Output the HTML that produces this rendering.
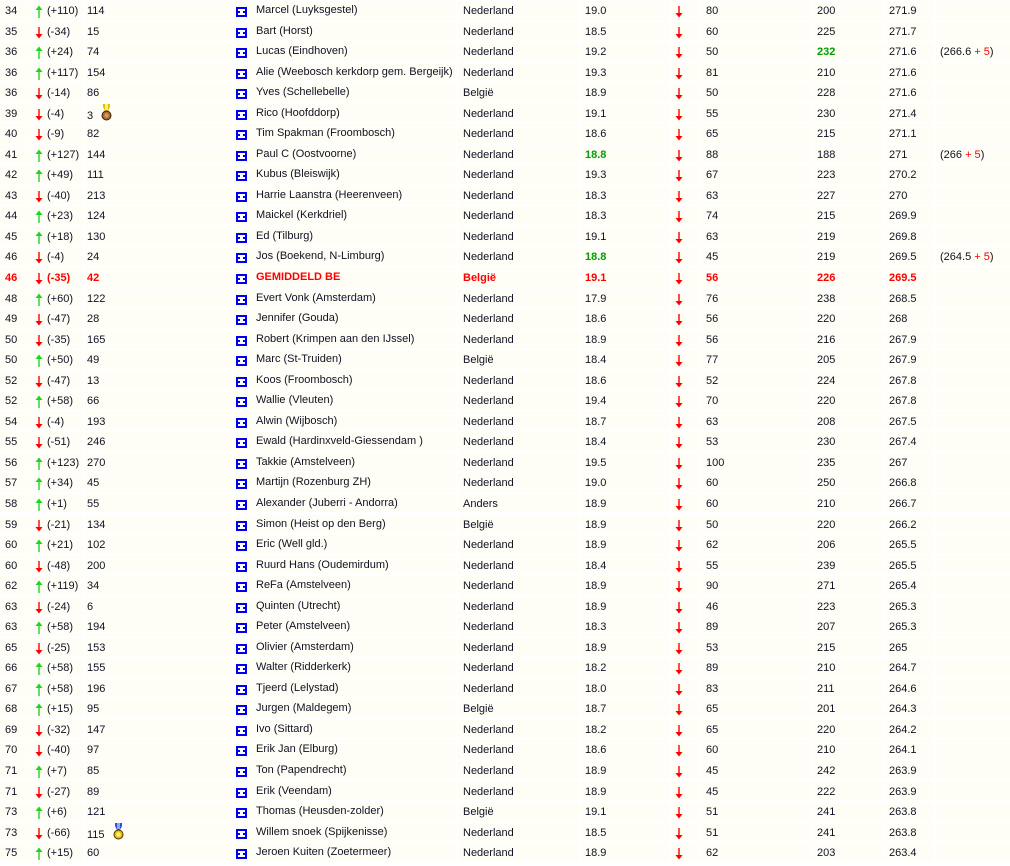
<!DOCTYPE html>
<html><head><meta charset="utf-8">
<style>
html,body{margin:0;padding:0;width:1010px;height:866px;overflow:hidden;background:#fff;}
body{font-family:"Liberation Sans",Arial,sans-serif;font-size:11px;color:#111122;position:relative;}
.r{position:absolute;left:0;width:1010px;height:18.5px;background:#fefdf6;}
.r span{position:absolute;top:4px;white-space:nowrap;}
.c1{left:5px}.c3{left:47px}.c4{left:87px}
.c5{left:256px;top:3px!important}.c6{left:463px}.c7{left:585px}.c9{left:706px}.c10{left:817px}.c11{left:889px}.c12{left:940px}
.g{color:#00a000;font-weight:bold}
.red span{color:#f00;font-weight:bold}
.p{color:#f00;position:static!important}
.r svg{position:absolute;top:4px}
.r svg.f{left:236px;top:6px}
.sep{position:absolute;top:0;height:866px;width:2px;background:#fff}
</style></head><body>
<svg width="0" height="0" style="position:absolute"><defs>
<symbol id="u" viewBox="0 0 8 13"><path d="M4 13V2" stroke="#1ed51e" stroke-width="1.4"/><path d="M0.5 5L4 0.5L7.5 5Z" fill="#1ed51e"/></symbol>
<symbol id="d" viewBox="0 0 8 13"><path d="M4 1V10" stroke="#f00" stroke-width="1.4"/><path d="M0.5 8L4 12.5L7.5 8Z" fill="#f00"/></symbol>
<symbol id="f" viewBox="0 0 11 10"><rect width="11" height="10" fill="#0000f0"/><rect x="2" y="2" width="7" height="2" fill="#fff"/><rect x="4" y="4" width="3" height="2" fill="#fff"/><rect x="2" y="6" width="7" height="2" fill="#fff"/></symbol>
</defs></svg>

<div class="r" style="top:1px"><span class="c1">34</span><svg style="left:35px" width="8" height="13"><use href="#u"/></svg><span class="c3">(+110)</span><span class="c4">114</span><svg class="f" width="11" height="10"><use href="#f"/></svg><span class="c5">Marcel (Luyksgestel)</span><span class="c6">Nederland</span><span class="c7">19.0</span><svg style="left:675px" width="8" height="13"><use href="#d"/></svg><span class="c9">80</span><span class="c10">200</span><span class="c11">271.9</span></div>
<div class="r" style="top:21.54px"><span class="c1">35</span><svg style="left:35px" width="8" height="13"><use href="#d"/></svg><span class="c3">(-34)</span><span class="c4">15</span><svg class="f" width="11" height="10"><use href="#f"/></svg><span class="c5">Bart (Horst)</span><span class="c6">Nederland</span><span class="c7">18.5</span><svg style="left:675px" width="8" height="13"><use href="#d"/></svg><span class="c9">60</span><span class="c10">225</span><span class="c11">271.7</span></div>
<div class="r" style="top:42.08px"><span class="c1">36</span><svg style="left:35px" width="8" height="13"><use href="#u"/></svg><span class="c3">(+24)</span><span class="c4">74</span><svg class="f" width="11" height="10"><use href="#f"/></svg><span class="c5">Lucas (Eindhoven)</span><span class="c6">Nederland</span><span class="c7">19.2</span><svg style="left:675px" width="8" height="13"><use href="#d"/></svg><span class="c9">50</span><span class="c10 g">232</span><span class="c11">271.6</span><span class="c12">(266.6 <span class="p">+ 5</span>)</span></div>
<div class="r" style="top:62.62px"><span class="c1">36</span><svg style="left:35px" width="8" height="13"><use href="#u"/></svg><span class="c3">(+117)</span><span class="c4">154</span><svg class="f" width="11" height="10"><use href="#f"/></svg><span class="c5">Alie (Weebosch kerkdorp gem. Bergeijk)</span><span class="c6">Nederland</span><span class="c7">19.3</span><svg style="left:675px" width="8" height="13"><use href="#d"/></svg><span class="c9">81</span><span class="c10">210</span><span class="c11">271.6</span></div>
<div class="r" style="top:83.16px"><span class="c1">36</span><svg style="left:35px" width="8" height="13"><use href="#d"/></svg><span class="c3">(-14)</span><span class="c4">86</span><svg class="f" width="11" height="10"><use href="#f"/></svg><span class="c5">Yves (Schellebelle)</span><span class="c6">België</span><span class="c7">18.9</span><svg style="left:675px" width="8" height="13"><use href="#d"/></svg><span class="c9">50</span><span class="c10">228</span><span class="c11">271.6</span></div>
<div class="r" style="top:103.7px"><span class="c1">39</span><svg style="left:35px" width="8" height="13"><use href="#d"/></svg><span class="c3">(-4)</span><span class="c4" style="top:6px">3</span><svg style="left:101px;top:0px" width="11" height="17" viewBox="0 0 11 17"><path d="M2 0h7v3L7 7h-3L2 3Z" fill="#e0c000"/><path d="M4 0h3v6h-3Z" fill="#fff07a"/><circle cx="5.5" cy="11.5" r="4.5" fill="#a86a2c" stroke="#3a2410" stroke-width="1"/><circle cx="5.5" cy="11.5" r="2.2" fill="#d49a5a"/></svg><svg class="f" width="11" height="10"><use href="#f"/></svg><span class="c5">Rico (Hoofddorp)</span><span class="c6">Nederland</span><span class="c7">19.1</span><svg style="left:675px" width="8" height="13"><use href="#d"/></svg><span class="c9">55</span><span class="c10">230</span><span class="c11">271.4</span></div>
<div class="r" style="top:124.24px"><span class="c1">40</span><svg style="left:35px" width="8" height="13"><use href="#d"/></svg><span class="c3">(-9)</span><span class="c4">82</span><svg class="f" width="11" height="10"><use href="#f"/></svg><span class="c5">Tim Spakman (Froombosch)</span><span class="c6">Nederland</span><span class="c7">18.6</span><svg style="left:675px" width="8" height="13"><use href="#d"/></svg><span class="c9">65</span><span class="c10">215</span><span class="c11">271.1</span></div>
<div class="r" style="top:144.78px"><span class="c1">41</span><svg style="left:35px" width="8" height="13"><use href="#u"/></svg><span class="c3">(+127)</span><span class="c4">144</span><svg class="f" width="11" height="10"><use href="#f"/></svg><span class="c5">Paul C (Oostvoorne)</span><span class="c6">Nederland</span><span class="c7 g">18.8</span><svg style="left:675px" width="8" height="13"><use href="#d"/></svg><span class="c9">88</span><span class="c10">188</span><span class="c11">271</span><span class="c12">(266 <span class="p">+ 5</span>)</span></div>
<div class="r" style="top:165.32px"><span class="c1">42</span><svg style="left:35px" width="8" height="13"><use href="#u"/></svg><span class="c3">(+49)</span><span class="c4">111</span><svg class="f" width="11" height="10"><use href="#f"/></svg><span class="c5">Kubus (Bleiswijk)</span><span class="c6">Nederland</span><span class="c7">19.3</span><svg style="left:675px" width="8" height="13"><use href="#d"/></svg><span class="c9">67</span><span class="c10">223</span><span class="c11">270.2</span></div>
<div class="r" style="top:185.86px"><span class="c1">43</span><svg style="left:35px" width="8" height="13"><use href="#d"/></svg><span class="c3">(-40)</span><span class="c4">213</span><svg class="f" width="11" height="10"><use href="#f"/></svg><span class="c5">Harrie Laanstra (Heerenveen)</span><span class="c6">Nederland</span><span class="c7">18.3</span><svg style="left:675px" width="8" height="13"><use href="#d"/></svg><span class="c9">63</span><span class="c10">227</span><span class="c11">270</span></div>
<div class="r" style="top:206.4px"><span class="c1">44</span><svg style="left:35px" width="8" height="13"><use href="#u"/></svg><span class="c3">(+23)</span><span class="c4">124</span><svg class="f" width="11" height="10"><use href="#f"/></svg><span class="c5">Maickel (Kerkdriel)</span><span class="c6">Nederland</span><span class="c7">18.3</span><svg style="left:675px" width="8" height="13"><use href="#d"/></svg><span class="c9">74</span><span class="c10">215</span><span class="c11">269.9</span></div>
<div class="r" style="top:226.94px"><span class="c1">45</span><svg style="left:35px" width="8" height="13"><use href="#u"/></svg><span class="c3">(+18)</span><span class="c4">130</span><svg class="f" width="11" height="10"><use href="#f"/></svg><span class="c5">Ed (Tilburg)</span><span class="c6">Nederland</span><span class="c7">19.1</span><svg style="left:675px" width="8" height="13"><use href="#d"/></svg><span class="c9">63</span><span class="c10">219</span><span class="c11">269.8</span></div>
<div class="r" style="top:247.48px"><span class="c1">46</span><svg style="left:35px" width="8" height="13"><use href="#d"/></svg><span class="c3">(-4)</span><span class="c4">24</span><svg class="f" width="11" height="10"><use href="#f"/></svg><span class="c5">Jos (Boekend, N-Limburg)</span><span class="c6">Nederland</span><span class="c7 g">18.8</span><svg style="left:675px" width="8" height="13"><use href="#d"/></svg><span class="c9">45</span><span class="c10">219</span><span class="c11">269.5</span><span class="c12">(264.5 <span class="p">+ 5</span>)</span></div>
<div class="r red" style="top:268.02px"><span class="c1">46</span><svg style="left:35px" width="8" height="13"><use href="#d"/></svg><span class="c3">(-35)</span><span class="c4">42</span><svg class="f" width="11" height="10"><use href="#f"/></svg><span class="c5">GEMIDDELD BE</span><span class="c6">België</span><span class="c7">19.1</span><svg style="left:675px" width="8" height="13"><use href="#d"/></svg><span class="c9">56</span><span class="c10">226</span><span class="c11">269.5</span></div>
<div class="r" style="top:288.56px"><span class="c1">48</span><svg style="left:35px" width="8" height="13"><use href="#u"/></svg><span class="c3">(+60)</span><span class="c4">122</span><svg class="f" width="11" height="10"><use href="#f"/></svg><span class="c5">Evert Vonk (Amsterdam)</span><span class="c6">Nederland</span><span class="c7">17.9</span><svg style="left:675px" width="8" height="13"><use href="#d"/></svg><span class="c9">76</span><span class="c10">238</span><span class="c11">268.5</span></div>
<div class="r" style="top:309.1px"><span class="c1">49</span><svg style="left:35px" width="8" height="13"><use href="#d"/></svg><span class="c3">(-47)</span><span class="c4">28</span><svg class="f" width="11" height="10"><use href="#f"/></svg><span class="c5">Jennifer (Gouda)</span><span class="c6">Nederland</span><span class="c7">18.6</span><svg style="left:675px" width="8" height="13"><use href="#d"/></svg><span class="c9">56</span><span class="c10">220</span><span class="c11">268</span></div>
<div class="r" style="top:329.64px"><span class="c1">50</span><svg style="left:35px" width="8" height="13"><use href="#d"/></svg><span class="c3">(-35)</span><span class="c4">165</span><svg class="f" width="11" height="10"><use href="#f"/></svg><span class="c5">Robert (Krimpen aan den IJssel)</span><span class="c6">Nederland</span><span class="c7">18.9</span><svg style="left:675px" width="8" height="13"><use href="#d"/></svg><span class="c9">56</span><span class="c10">216</span><span class="c11">267.9</span></div>
<div class="r" style="top:350.18px"><span class="c1">50</span><svg style="left:35px" width="8" height="13"><use href="#u"/></svg><span class="c3">(+50)</span><span class="c4">49</span><svg class="f" width="11" height="10"><use href="#f"/></svg><span class="c5">Marc (St-Truiden)</span><span class="c6">België</span><span class="c7">18.4</span><svg style="left:675px" width="8" height="13"><use href="#d"/></svg><span class="c9">77</span><span class="c10">205</span><span class="c11">267.9</span></div>
<div class="r" style="top:370.72px"><span class="c1">52</span><svg style="left:35px" width="8" height="13"><use href="#d"/></svg><span class="c3">(-47)</span><span class="c4">13</span><svg class="f" width="11" height="10"><use href="#f"/></svg><span class="c5">Koos (Froombosch)</span><span class="c6">Nederland</span><span class="c7">18.6</span><svg style="left:675px" width="8" height="13"><use href="#d"/></svg><span class="c9">52</span><span class="c10">224</span><span class="c11">267.8</span></div>
<div class="r" style="top:391.26px"><span class="c1">52</span><svg style="left:35px" width="8" height="13"><use href="#u"/></svg><span class="c3">(+58)</span><span class="c4">66</span><svg class="f" width="11" height="10"><use href="#f"/></svg><span class="c5">Wallie (Vleuten)</span><span class="c6">Nederland</span><span class="c7">19.4</span><svg style="left:675px" width="8" height="13"><use href="#d"/></svg><span class="c9">70</span><span class="c10">220</span><span class="c11">267.8</span></div>
<div class="r" style="top:411.8px"><span class="c1">54</span><svg style="left:35px" width="8" height="13"><use href="#d"/></svg><span class="c3">(-4)</span><span class="c4">193</span><svg class="f" width="11" height="10"><use href="#f"/></svg><span class="c5">Alwin (Wijbosch)</span><span class="c6">Nederland</span><span class="c7">18.7</span><svg style="left:675px" width="8" height="13"><use href="#d"/></svg><span class="c9">63</span><span class="c10">208</span><span class="c11">267.5</span></div>
<div class="r" style="top:432.34px"><span class="c1">55</span><svg style="left:35px" width="8" height="13"><use href="#d"/></svg><span class="c3">(-51)</span><span class="c4">246</span><svg class="f" width="11" height="10"><use href="#f"/></svg><span class="c5">Ewald (Hardinxveld-Giessendam )</span><span class="c6">Nederland</span><span class="c7">18.4</span><svg style="left:675px" width="8" height="13"><use href="#d"/></svg><span class="c9">53</span><span class="c10">230</span><span class="c11">267.4</span></div>
<div class="r" style="top:452.88px"><span class="c1">56</span><svg style="left:35px" width="8" height="13"><use href="#u"/></svg><span class="c3">(+123)</span><span class="c4">270</span><svg class="f" width="11" height="10"><use href="#f"/></svg><span class="c5">Takkie (Amstelveen)</span><span class="c6">Nederland</span><span class="c7">19.5</span><svg style="left:675px" width="8" height="13"><use href="#d"/></svg><span class="c9">100</span><span class="c10">235</span><span class="c11">267</span></div>
<div class="r" style="top:473.42px"><span class="c1">57</span><svg style="left:35px" width="8" height="13"><use href="#u"/></svg><span class="c3">(+34)</span><span class="c4">45</span><svg class="f" width="11" height="10"><use href="#f"/></svg><span class="c5">Martijn (Rozenburg ZH)</span><span class="c6">Nederland</span><span class="c7">19.0</span><svg style="left:675px" width="8" height="13"><use href="#d"/></svg><span class="c9">60</span><span class="c10">250</span><span class="c11">266.8</span></div>
<div class="r" style="top:493.96px"><span class="c1">58</span><svg style="left:35px" width="8" height="13"><use href="#u"/></svg><span class="c3">(+1)</span><span class="c4">55</span><svg class="f" width="11" height="10"><use href="#f"/></svg><span class="c5">Alexander (Juberri - Andorra)</span><span class="c6">Anders</span><span class="c7">18.9</span><svg style="left:675px" width="8" height="13"><use href="#d"/></svg><span class="c9">60</span><span class="c10">210</span><span class="c11">266.7</span></div>
<div class="r" style="top:514.5px"><span class="c1">59</span><svg style="left:35px" width="8" height="13"><use href="#d"/></svg><span class="c3">(-21)</span><span class="c4">134</span><svg class="f" width="11" height="10"><use href="#f"/></svg><span class="c5">Simon (Heist op den Berg)</span><span class="c6">België</span><span class="c7">18.9</span><svg style="left:675px" width="8" height="13"><use href="#d"/></svg><span class="c9">50</span><span class="c10">220</span><span class="c11">266.2</span></div>
<div class="r" style="top:535.04px"><span class="c1">60</span><svg style="left:35px" width="8" height="13"><use href="#u"/></svg><span class="c3">(+21)</span><span class="c4">102</span><svg class="f" width="11" height="10"><use href="#f"/></svg><span class="c5">Eric (Well gld.)</span><span class="c6">Nederland</span><span class="c7">18.9</span><svg style="left:675px" width="8" height="13"><use href="#d"/></svg><span class="c9">62</span><span class="c10">206</span><span class="c11">265.5</span></div>
<div class="r" style="top:555.58px"><span class="c1">60</span><svg style="left:35px" width="8" height="13"><use href="#d"/></svg><span class="c3">(-48)</span><span class="c4">200</span><svg class="f" width="11" height="10"><use href="#f"/></svg><span class="c5">Ruurd Hans (Oudemirdum)</span><span class="c6">Nederland</span><span class="c7">18.4</span><svg style="left:675px" width="8" height="13"><use href="#d"/></svg><span class="c9">55</span><span class="c10">239</span><span class="c11">265.5</span></div>
<div class="r" style="top:576.12px"><span class="c1">62</span><svg style="left:35px" width="8" height="13"><use href="#u"/></svg><span class="c3">(+119)</span><span class="c4">34</span><svg class="f" width="11" height="10"><use href="#f"/></svg><span class="c5">ReFa (Amstelveen)</span><span class="c6">Nederland</span><span class="c7">18.9</span><svg style="left:675px" width="8" height="13"><use href="#d"/></svg><span class="c9">90</span><span class="c10">271</span><span class="c11">265.4</span></div>
<div class="r" style="top:596.66px"><span class="c1">63</span><svg style="left:35px" width="8" height="13"><use href="#d"/></svg><span class="c3">(-24)</span><span class="c4">6</span><svg class="f" width="11" height="10"><use href="#f"/></svg><span class="c5">Quinten (Utrecht)</span><span class="c6">Nederland</span><span class="c7">18.9</span><svg style="left:675px" width="8" height="13"><use href="#d"/></svg><span class="c9">46</span><span class="c10">223</span><span class="c11">265.3</span></div>
<div class="r" style="top:617.2px"><span class="c1">63</span><svg style="left:35px" width="8" height="13"><use href="#u"/></svg><span class="c3">(+58)</span><span class="c4">194</span><svg class="f" width="11" height="10"><use href="#f"/></svg><span class="c5">Peter (Amstelveen)</span><span class="c6">Nederland</span><span class="c7">18.3</span><svg style="left:675px" width="8" height="13"><use href="#d"/></svg><span class="c9">89</span><span class="c10">207</span><span class="c11">265.3</span></div>
<div class="r" style="top:637.74px"><span class="c1">65</span><svg style="left:35px" width="8" height="13"><use href="#d"/></svg><span class="c3">(-25)</span><span class="c4">153</span><svg class="f" width="11" height="10"><use href="#f"/></svg><span class="c5">Olivier (Amsterdam)</span><span class="c6">Nederland</span><span class="c7">18.9</span><svg style="left:675px" width="8" height="13"><use href="#d"/></svg><span class="c9">53</span><span class="c10">215</span><span class="c11">265</span></div>
<div class="r" style="top:658.28px"><span class="c1">66</span><svg style="left:35px" width="8" height="13"><use href="#u"/></svg><span class="c3">(+58)</span><span class="c4">155</span><svg class="f" width="11" height="10"><use href="#f"/></svg><span class="c5">Walter (Ridderkerk)</span><span class="c6">Nederland</span><span class="c7">18.2</span><svg style="left:675px" width="8" height="13"><use href="#d"/></svg><span class="c9">89</span><span class="c10">210</span><span class="c11">264.7</span></div>
<div class="r" style="top:678.82px"><span class="c1">67</span><svg style="left:35px" width="8" height="13"><use href="#u"/></svg><span class="c3">(+58)</span><span class="c4">196</span><svg class="f" width="11" height="10"><use href="#f"/></svg><span class="c5">Tjeerd (Lelystad)</span><span class="c6">Nederland</span><span class="c7">18.0</span><svg style="left:675px" width="8" height="13"><use href="#d"/></svg><span class="c9">83</span><span class="c10">211</span><span class="c11">264.6</span></div>
<div class="r" style="top:699.36px"><span class="c1">68</span><svg style="left:35px" width="8" height="13"><use href="#u"/></svg><span class="c3">(+15)</span><span class="c4">95</span><svg class="f" width="11" height="10"><use href="#f"/></svg><span class="c5">Jurgen (Maldegem)</span><span class="c6">België</span><span class="c7">18.7</span><svg style="left:675px" width="8" height="13"><use href="#d"/></svg><span class="c9">65</span><span class="c10">201</span><span class="c11">264.3</span></div>
<div class="r" style="top:719.9px"><span class="c1">69</span><svg style="left:35px" width="8" height="13"><use href="#d"/></svg><span class="c3">(-32)</span><span class="c4">147</span><svg class="f" width="11" height="10"><use href="#f"/></svg><span class="c5">Ivo (Sittard)</span><span class="c6">Nederland</span><span class="c7">18.2</span><svg style="left:675px" width="8" height="13"><use href="#d"/></svg><span class="c9">65</span><span class="c10">220</span><span class="c11">264.2</span></div>
<div class="r" style="top:740.44px"><span class="c1">70</span><svg style="left:35px" width="8" height="13"><use href="#d"/></svg><span class="c3">(-40)</span><span class="c4">97</span><svg class="f" width="11" height="10"><use href="#f"/></svg><span class="c5">Erik Jan (Elburg)</span><span class="c6">Nederland</span><span class="c7">18.6</span><svg style="left:675px" width="8" height="13"><use href="#d"/></svg><span class="c9">60</span><span class="c10">210</span><span class="c11">264.1</span></div>
<div class="r" style="top:760.98px"><span class="c1">71</span><svg style="left:35px" width="8" height="13"><use href="#u"/></svg><span class="c3">(+7)</span><span class="c4">85</span><svg class="f" width="11" height="10"><use href="#f"/></svg><span class="c5">Ton (Papendrecht)</span><span class="c6">Nederland</span><span class="c7">18.9</span><svg style="left:675px" width="8" height="13"><use href="#d"/></svg><span class="c9">45</span><span class="c10">242</span><span class="c11">263.9</span></div>
<div class="r" style="top:781.52px"><span class="c1">71</span><svg style="left:35px" width="8" height="13"><use href="#d"/></svg><span class="c3">(-27)</span><span class="c4">89</span><svg class="f" width="11" height="10"><use href="#f"/></svg><span class="c5">Erik (Veendam)</span><span class="c6">Nederland</span><span class="c7">18.9</span><svg style="left:675px" width="8" height="13"><use href="#d"/></svg><span class="c9">45</span><span class="c10">222</span><span class="c11">263.9</span></div>
<div class="r" style="top:802.06px"><span class="c1">73</span><svg style="left:35px" width="8" height="13"><use href="#u"/></svg><span class="c3">(+6)</span><span class="c4">121</span><svg class="f" width="11" height="10"><use href="#f"/></svg><span class="c5">Thomas (Heusden-zolder)</span><span class="c6">België</span><span class="c7">19.1</span><svg style="left:675px" width="8" height="13"><use href="#d"/></svg><span class="c9">51</span><span class="c10">241</span><span class="c11">263.8</span></div>
<div class="r" style="top:822.6px"><span class="c1">73</span><svg style="left:35px" width="8" height="13"><use href="#d"/></svg><span class="c3">(-66)</span><span class="c4" style="top:6px">115</span><svg style="left:113px;top:0px" width="11" height="17" viewBox="0 0 11 17"><path d="M2 0h7v3L7 7h-3L2 3Z" fill="#3050d0"/><path d="M4 0h3v6h-3Z" fill="#8fa8ff"/><circle cx="5.5" cy="11.5" r="4.5" fill="#e8c000" stroke="#4a3800" stroke-width="1"/><circle cx="5.5" cy="11.5" r="2.2" fill="#fff080"/></svg><svg class="f" width="11" height="10"><use href="#f"/></svg><span class="c5">Willem snoek (Spijkenisse)</span><span class="c6">Nederland</span><span class="c7">18.5</span><svg style="left:675px" width="8" height="13"><use href="#d"/></svg><span class="c9">51</span><span class="c10">241</span><span class="c11">263.8</span></div>
<div class="r" style="top:843.14px"><span class="c1">75</span><svg style="left:35px" width="8" height="13"><use href="#u"/></svg><span class="c3">(+15)</span><span class="c4">60</span><svg class="f" width="11" height="10"><use href="#f"/></svg><span class="c5">Jeroen Kuiten (Zoetermeer)</span><span class="c6">Nederland</span><span class="c7">18.9</span><svg style="left:675px" width="8" height="13"><use href="#d"/></svg><span class="c9">62</span><span class="c10">203</span><span class="c11">263.4</span></div>

<div class="sep" style="left:31px"></div><div class="sep" style="left:83px"></div><div class="sep" style="left:232px"></div><div class="sep" style="left:456px"></div><div class="sep" style="left:579px"></div><div class="sep" style="left:670px"></div><div class="sep" style="left:700px"></div><div class="sep" style="left:812px"></div><div class="sep" style="left:884px"></div><div class="sep" style="left:934px"></div>
</body></html>
